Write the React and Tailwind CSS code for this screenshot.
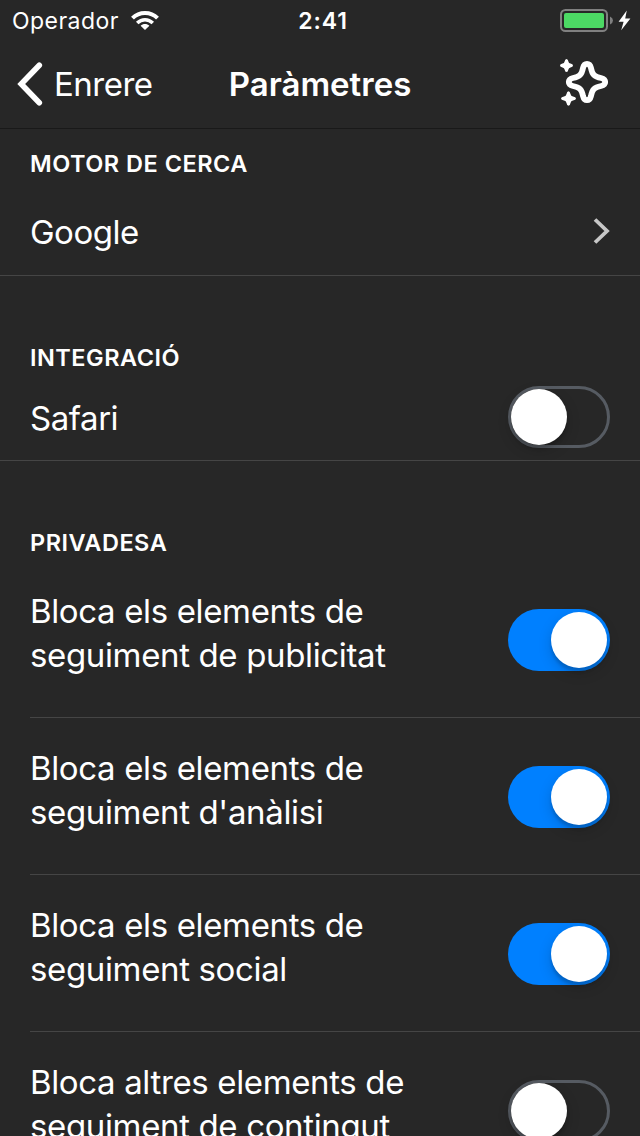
import React from "react";

function Toggle({ on }) {
  return on ? (
    <span className="flex h-[62px] w-[102px] shrink-0 items-center justify-end rounded-full bg-[#0080ff] pb-px pr-[3px]">
      <span className="size-14 rounded-full bg-white shadow-[0_5px_14px_rgba(0,0,0,0.16),0_4px_3px_rgba(0,0,0,0.14)]" />
    </span>
  ) : (
    <span className="flex h-[62px] w-[102px] shrink-0 items-center rounded-full border-[3px] border-[#565b62]">
      <span className="size-14 rounded-full bg-white shadow-[0_5px_14px_rgba(0,0,0,0.18),0_4px_3px_rgba(0,0,0,0.14)]" />
    </span>
  );
}

function StatusBar() {
  return (
    <div className="grid h-10 grid-cols-[1fr_auto_1fr] items-center pl-3 pr-[9px]">
      <div className="flex items-center">
        <span className="w-[119px] pt-px text-[23px] leading-10 tracking-[0.45px]">Operador</span>
        <svg width="28" height="21" viewBox="0 0 28 21" fill="none" stroke="white" strokeWidth="4">
          <path d="M1.5 8.2C8.3 1.2 19.7 1.2 26.5 8.2" />
          <path d="M6.2 13.1C10.7 8.7 17.3 8.7 21.8 13.1" strokeWidth="3.5" />
          <path d="M14 20 9.6 15.7C12 13.4 16 13.4 18.4 15.7Z" fill="white" stroke="none" />
        </svg>
      </div>
      <span className="pl-[3px] pt-px text-[23px] font-semibold leading-10 tracking-[0.9px]">2:41</span>
      <div className="flex items-center justify-end">
        <svg width="71" height="24" viewBox="0 0 71 24">
          <rect x="1" y="1" width="46" height="21" rx="4.5" fill="none" stroke="#808080" strokeWidth="2" />
          <rect x="4" y="4" width="40" height="15" rx="2" fill="#4cd964" />
          <path d="M50 7.5Q53 9 53 11.5T50 15.5Z" fill="#808080" />
          <path d="M66.8 1.6 58.6 12.8H63.6L61.2 21.2 70.4 9.6H65.2Z" fill="white" />
        </svg>
      </div>
    </div>
  );
}

function NavBar() {
  return (
    <header className="grid h-[89px] grid-cols-[1fr_auto_1fr] items-center border-b border-[#191919] px-4">
      <div className="flex items-center">
        <svg width="38" height="46" viewBox="0 0 38 46" fill="none" stroke="white" strokeWidth="5.6" strokeLinecap="round">
          <path d="M23.3 4.3 5.2 23 23.3 41.7" />
        </svg>
        <span className="text-[33px] leading-[88px] tracking-[-0.5px]">Enrere</span>
      </div>
      <h1 className="text-[33px] font-semibold leading-[88px]">Paràmetres</h1>
      <svg className="mb-1 mr-[15px] justify-self-end" width="51" height="48" viewBox="0 0 51 48">
        <path
          d="M29 5.9Q32 5.9 33 10C34.2 16.6 36.4 18.8 43 20Q47.2 21 47.2 24T43 28C36.4 29.2 34.2 31.4 33 38Q32 42.1 29 42.1T25 38C23.8 31.4 21.6 29.2 15 28Q10.8 27 10.8 24T15 20C21.6 18.8 23.8 16.6 25 10Q26 5.9 29 5.9Z"
          fill="none"
          stroke="white"
          strokeWidth="5.8"
          strokeLinejoin="round"
        />
        <path d="M8.5 1Q10 1 10.4 3.5Q10.7 5.3 12.5 5.6Q15 6 15 7.5T12.5 9.4Q10.7 9.7 10.4 11.5Q10 14 8.5 14T6.6 11.5Q6.3 9.7 4.5 9.4Q2 9 2 7.5T4.5 5.6Q6.3 5.3 6.6 3.5Q7 1 8.5 1Z" fill="white" />
        <path d="M10.5 33.2Q12 33.2 12.5 36Q12.9 38 15 38.5Q18 39 18 40.5T15 42.6Q12.9 43.1 12.5 45Q12 47.8 10.5 47.8T8.5 45Q8.1 43.1 6 42.6Q3 42 3 40.5T6 38.5Q8.1 38 8.5 36Q9 33.2 10.5 33.2Z" fill="white" />
      </svg>
    </header>
  );
}

function SectionTitle({ children }) {
  return <h2 className="text-[23.5px] font-semibold leading-8 tracking-[0.5px]">{children}</h2>;
}

const trackers = [
  { lines: ["Bloca els elements de", "seguiment de publicitat"], on: true },
  { lines: ["Bloca els elements de", "seguiment d'anàlisi"], on: true },
  { lines: ["Bloca els elements de", "seguiment social"], on: true },
  { lines: ["Bloca altres elements de", "seguiment de contingut"], on: false },
];

export default function App() {
  return (
    <div className="h-[1136px] w-[640px] overflow-hidden bg-[#272727] font-['Inter',sans-serif] text-white">
      <StatusBar />
      <NavBar />
      <main>
        <section className="flex h-[147px] flex-col border-b border-[#454545] px-[30px] pt-[19px]">
          <SectionTitle>MOTOR DE CERCA</SectionTitle>
          <div className="mt-7 flex h-12 items-center justify-between">
            <span className="text-[33px] leading-[44px] tracking-[-0.5px]">Google</span>
            <svg className="mb-0.5" width="17" height="28" viewBox="0 0 17 28" fill="none" stroke="#c7c7c7" strokeWidth="3.8">
              <path d="M2 2.5 14 14 2 25.5" />
            </svg>
          </div>
        </section>
        <section className="flex h-[185px] flex-col border-b border-[#454545] px-[30px] pt-[66px]">
          <SectionTitle>INTEGRACIÓ</SectionTitle>
          <div className="mt-3 flex h-[62px] items-center justify-between">
            <span className="pt-0.5 text-[33px] leading-[44px] tracking-[-0.45px]">Safari</span>
            <Toggle on={false} />
          </div>
        </section>
        <section className="pl-[30px] pt-[66px]">
          <SectionTitle>PRIVADESA</SectionTitle>
          <ul className="mt-0.5">
            {trackers.map((t) => (
              <li key={t.lines.join()} className="flex h-[157px] items-start justify-between border-b border-[#454545] pr-[30px]">
                <div className="pt-7 text-[33px] leading-[44px] tracking-[-0.36px]">
                  {t.lines.map((line) => (
                    <div key={line} className="whitespace-nowrap">{line}</div>
                  ))}
                </div>
                <div className="flex pt-12">
                  <Toggle on={t.on} />
                </div>
              </li>
            ))}
          </ul>
        </section>
      </main>
    </div>
  );
}
